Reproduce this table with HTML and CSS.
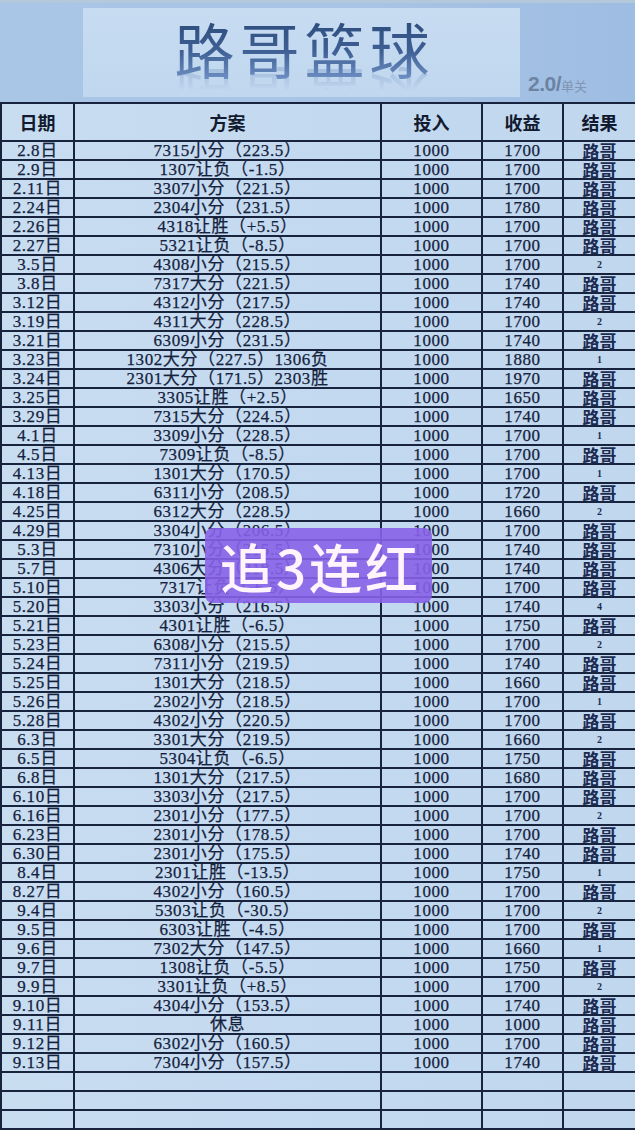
FILE: index.html
```html
<!DOCTYPE html>
<html lang="zh-CN">
<head>
<meta charset="utf-8">
<title>路哥篮球</title>
<link rel="stylesheet" href="styles.css">
</head>
<body>
<div class="page">
  <header class="banner">
    <div class="banner-inner"><h1 class="title">路哥篮球</h1></div>
    <div class="version"><span class="ver-num">2.0/</span><span class="ver-label">单关</span></div>
  </header>
  <div class="table-wrap">
    <table class="ledger">
      <colgroup>
        <col class="c-date"><col class="c-plan"><col class="c-in"><col class="c-out"><col class="c-res">
      </colgroup>
      <thead>
        <tr><th>日期</th><th>方案</th><th>投入</th><th>收益</th><th>结果</th></tr>
      </thead>
      <tbody>
        <tr><td>2.8日</td><td>7315小分（223.5）</td><td>1000</td><td>1700</td><td class="win">路哥</td></tr>
        <tr><td>2.9日</td><td>1307让负（-1.5）</td><td>1000</td><td>1700</td><td class="win">路哥</td></tr>
        <tr><td>2.11日</td><td>3307小分（221.5）</td><td>1000</td><td>1700</td><td class="win">路哥</td></tr>
        <tr><td>2.24日</td><td>2304小分（231.5）</td><td>1000</td><td>1780</td><td class="win">路哥</td></tr>
        <tr><td>2.26日</td><td>4318让胜（+5.5）</td><td>1000</td><td>1700</td><td class="win">路哥</td></tr>
        <tr><td>2.27日</td><td>5321让负（-8.5）</td><td>1000</td><td>1700</td><td class="win">路哥</td></tr>
        <tr><td>3.5日</td><td>4308小分（215.5）</td><td>1000</td><td>1700</td><td class="num">2</td></tr>
        <tr><td>3.8日</td><td>7317大分（221.5）</td><td>1000</td><td>1740</td><td class="win">路哥</td></tr>
        <tr><td>3.12日</td><td>4312小分（217.5）</td><td>1000</td><td>1740</td><td class="win">路哥</td></tr>
        <tr><td>3.19日</td><td>4311大分（228.5）</td><td>1000</td><td>1700</td><td class="num">2</td></tr>
        <tr><td>3.21日</td><td>6309小分（231.5）</td><td>1000</td><td>1740</td><td class="win">路哥</td></tr>
        <tr><td>3.23日</td><td>1302大分（227.5）1306负</td><td>1000</td><td>1880</td><td class="num">1</td></tr>
        <tr><td>3.24日</td><td>2301大分（171.5）2303胜</td><td>1000</td><td>1970</td><td class="win">路哥</td></tr>
        <tr><td>3.25日</td><td>3305让胜（+2.5）</td><td>1000</td><td>1650</td><td class="win">路哥</td></tr>
        <tr><td>3.29日</td><td>7315大分（224.5）</td><td>1000</td><td>1740</td><td class="win">路哥</td></tr>
        <tr><td>4.1日</td><td>3309小分（228.5）</td><td>1000</td><td>1700</td><td class="num">1</td></tr>
        <tr><td>4.5日</td><td>7309让负（-8.5）</td><td>1000</td><td>1700</td><td class="win">路哥</td></tr>
        <tr><td>4.13日</td><td>1301大分（170.5）</td><td>1000</td><td>1700</td><td class="num">1</td></tr>
        <tr><td>4.18日</td><td>6311小分（208.5）</td><td>1000</td><td>1720</td><td class="win">路哥</td></tr>
        <tr><td>4.25日</td><td>6312大分（228.5）</td><td>1000</td><td>1660</td><td class="num">2</td></tr>
        <tr><td>4.29日</td><td>3304小分（206.5）</td><td>1000</td><td>1700</td><td class="win">路哥</td></tr>
        <tr><td>5.3日</td><td>7310小分（215.5）</td><td>1000</td><td>1740</td><td class="win">路哥</td></tr>
        <tr><td>5.7日</td><td>4306大分（218.5）</td><td>1000</td><td>1740</td><td class="win">路哥</td></tr>
        <tr><td>5.10日</td><td>7317让负（-6.5）</td><td>1000</td><td>1700</td><td class="win">路哥</td></tr>
        <tr><td>5.20日</td><td>3303小分（216.5）</td><td>1000</td><td>1740</td><td class="num">4</td></tr>
        <tr><td>5.21日</td><td>4301让胜（-6.5）</td><td>1000</td><td>1750</td><td class="win">路哥</td></tr>
        <tr><td>5.23日</td><td>6308小分（215.5）</td><td>1000</td><td>1700</td><td class="num">2</td></tr>
        <tr><td>5.24日</td><td>7311小分（219.5）</td><td>1000</td><td>1740</td><td class="win">路哥</td></tr>
        <tr><td>5.25日</td><td>1301大分（218.5）</td><td>1000</td><td>1660</td><td class="win">路哥</td></tr>
        <tr><td>5.26日</td><td>2302小分（218.5）</td><td>1000</td><td>1700</td><td class="num">1</td></tr>
        <tr><td>5.28日</td><td>4302小分（220.5）</td><td>1000</td><td>1700</td><td class="win">路哥</td></tr>
        <tr><td>6.3日</td><td>3301大分（219.5）</td><td>1000</td><td>1660</td><td class="num">2</td></tr>
        <tr><td>6.5日</td><td>5304让负（-6.5）</td><td>1000</td><td>1750</td><td class="win">路哥</td></tr>
        <tr><td>6.8日</td><td>1301大分（217.5）</td><td>1000</td><td>1680</td><td class="win">路哥</td></tr>
        <tr><td>6.10日</td><td>3303小分（217.5）</td><td>1000</td><td>1700</td><td class="win">路哥</td></tr>
        <tr><td>6.16日</td><td>2301小分（177.5）</td><td>1000</td><td>1700</td><td class="num">2</td></tr>
        <tr><td>6.23日</td><td>2301小分（178.5）</td><td>1000</td><td>1700</td><td class="win">路哥</td></tr>
        <tr><td>6.30日</td><td>2301小分（175.5）</td><td>1000</td><td>1740</td><td class="win">路哥</td></tr>
        <tr><td>8.4日</td><td>2301让胜（-13.5）</td><td>1000</td><td>1750</td><td class="num">1</td></tr>
        <tr><td>8.27日</td><td>4302小分（160.5）</td><td>1000</td><td>1700</td><td class="win">路哥</td></tr>
        <tr><td>9.4日</td><td>5303让负（-30.5）</td><td>1000</td><td>1700</td><td class="num">2</td></tr>
        <tr><td>9.5日</td><td>6303让胜（-4.5）</td><td>1000</td><td>1700</td><td class="win">路哥</td></tr>
        <tr><td>9.6日</td><td>7302大分（147.5）</td><td>1000</td><td>1660</td><td class="num">1</td></tr>
        <tr><td>9.7日</td><td>1308让负（-5.5）</td><td>1000</td><td>1750</td><td class="win">路哥</td></tr>
        <tr><td>9.9日</td><td>3301让负（+8.5）</td><td>1000</td><td>1700</td><td class="num">2</td></tr>
        <tr><td>9.10日</td><td>4304小分（153.5）</td><td>1000</td><td>1740</td><td class="win">路哥</td></tr>
        <tr><td>9.11日</td><td>休息</td><td>1000</td><td>1000</td><td class="win">路哥</td></tr>
        <tr><td>9.12日</td><td>6302小分（160.5）</td><td>1000</td><td>1700</td><td class="win">路哥</td></tr>
        <tr><td>9.13日</td><td>7304小分（157.5）</td><td>1000</td><td>1740</td><td class="win">路哥</td></tr>
        <tr class="empty"><td></td><td></td><td></td><td></td><td></td></tr>
        <tr class="empty"><td></td><td></td><td></td><td></td><td></td></tr>
        <tr class="empty"><td></td><td></td><td></td><td></td><td></td></tr>
      </tbody>
    </table>
    <div class="badge">追3连红</div>
  </div>
</div>
</body>
</html>
```
FILE: styles.css
```css
html, body {
  margin: 0;
  padding: 0;
  background: #c4d9ef;
}

.page {
  width: 635px;
  font-family: "Liberation Serif", "Noto Sans CJK SC", serif;
  color: #15223d;
}

/* ---------- banner ---------- */
.banner {
  height: 102px;
  box-sizing: border-box;
  display: flex;
  align-items: stretch;
  padding: 8px 0 5px 83px;
  border-top: 3px solid #b4c8dc;
  background: linear-gradient(90deg, #aac6e6 0%, #a7c3e5 60%, #9ebde2 100%);
}

.banner-inner {
  width: 437px;
  margin-top: -3px;
  display: flex;
  justify-content: center;
  align-items: flex-start;
  background: linear-gradient(180deg, #c7dcf1 0%, #c0d7ef 100%);
}

.title {
  margin: 8px 0 0 6px;
  font-family: "Noto Sans CJK SC", sans-serif;
  font-weight: 400;
  font-size: 60px;
  line-height: 64px;
  letter-spacing: 5px;
  background: linear-gradient(180deg, #2c4a7a 0%, #3f6095 55%, #6e90c4 100%);
  -webkit-background-clip: text;
  background-clip: text;
  color: transparent;
  -webkit-box-reflect: below -14px linear-gradient(180deg, transparent 62%, rgba(255, 255, 255, 0.35) 100%);
}

.version {
  align-self: flex-end;
  margin-left: 8px;
  margin-bottom: 1px;
  display: flex;
  align-items: baseline;
}

.ver-num {
  font-family: "Liberation Sans", sans-serif;
  font-weight: 700;
  font-size: 21px;
  letter-spacing: -0.5px;
  color: #6c83a3;
}

.ver-label {
  font-family: "Noto Sans CJK SC", sans-serif;
  font-size: 13px;
  color: #7f95b3;
}

/* ---------- table ---------- */
.table-wrap {
  position: relative;
}

.ledger {
  width: 635px;
  table-layout: fixed;
  border-collapse: collapse;
  background: linear-gradient(90deg, #c9ddf1 0%, #c3d9ef 50%, #c1d7ee 100%);
}

.c-date { width: 73px; }
.c-plan { width: 307px; }
.c-in { width: 101px; }
.c-out { width: 81px; }
.c-res { width: 73px; }

.ledger th,
.ledger td {
  border: 2px solid #18233d;
  padding: 0;
  text-align: center;
  white-space: nowrap;
}

.ledger th {
  height: 36px;
  font-family: "Noto Sans CJK SC", sans-serif;
  font-weight: 700;
  font-size: 18px;
  color: #111a2e;
}

.ledger td {
  height: 17px;
  font-size: 17px;
  line-height: 17px;
  letter-spacing: 0.6px;
  -webkit-text-stroke: 0.25px #15223d;
}

.ledger td.win {
  font-family: "Noto Sans CJK SC", sans-serif;
  font-weight: 700;
  font-size: 17px;
  line-height: 17px;
  letter-spacing: 0;
  -webkit-text-stroke: 0;
  color: #1b2b52;
}

.ledger td.num {
  font-family: "Liberation Serif", serif;
  font-weight: 700;
  font-size: 10px;
  letter-spacing: 0;
  -webkit-text-stroke: 0;
  color: #1b2b52;
}

/* ---------- overlay badge ---------- */
.badge {
  position: absolute;
  left: 205px;
  top: 426px;
  width: 227px;
  height: 75px;
  box-sizing: border-box;
  display: flex;
  align-items: center;
  justify-content: center;
  padding-left: 4px;
  border-radius: 8px;
  background: rgba(136, 98, 232, 0.9);
  font-family: "Noto Sans CJK SC", sans-serif;
  font-weight: 500;
  font-size: 53px;
  letter-spacing: 3px;
  color: #fff4fc;
}
```
